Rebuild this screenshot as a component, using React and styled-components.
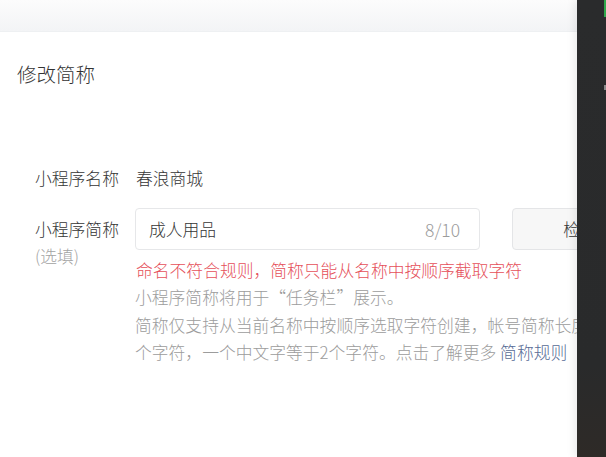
import React from "react";
import styled, { createGlobalStyle } from "styled-components";

const GlobalStyle = createGlobalStyle`
	html, body {
		margin: 0;
		padding: 0;
		background: #fff;
	}
	body {
		font-family: "Noto Sans CJK SC", "Liberation Sans", sans-serif;
		font-weight: 300;
		color: #353535;
	}
`;

const Page = styled.div`
	position: relative;
	width: 606px;
	height: 457px;
	overflow: hidden;
	background: #fff;
`;

const TopBar = styled.div`
	height: 31px;
	background: linear-gradient(#fcfcfc, #f3f4f6);
	border-bottom: 1px solid #eef0f2;
`;

const Panel = styled.div`
	padding: 28px 0 0 17px;
`;

const Title = styled.h2`
	margin: 0;
	font-size: 19.5px;
	font-weight: 300;
	line-height: 27px;
	color: #333;
`;

const Form = styled.div`
	display: flex;
	flex-direction: column;
	padding: 79px 0 0 18px;
`;

const Row = styled.div`
	display: flex;
	align-items: flex-start;
	margin-top: ${({ gap }) => gap || 0}px;
`;

const Label = styled.div`
	width: 100px;
	flex-shrink: 0;
	font-size: 16.8px;
	line-height: ${({ tall }) => (tall ? "42px" : "24px")};
	color: #353535;
`;

const Optional = styled.div`
	font-size: 16.8px;
	line-height: 12px;
	color: #a3a3a3;
`;

const Value = styled.div`
	font-size: 16.8px;
	line-height: 24px;
	padding-left: 1px;
	color: #353535;
`;

const Field = styled.div`
	display: flex;
	flex-direction: column;
`;

const Controls = styled.div`
	display: flex;
	align-items: center;
	gap: 32px;
`;

const InputBox = styled.div`
	box-sizing: border-box;
	width: 345px;
	height: 42px;
	border: 1px solid #e6e7e9;
	border-radius: 4px;
	display: flex;
	align-items: center;
	justify-content: space-between;
	padding: 0 19px 0 13px;
	font-size: 16.8px;
	color: #353535;
`;

const Counter = styled.span`
	font-size: 17.5px;
	color: #9c9c9c;
`;

const CheckButton = styled.button`
	box-sizing: border-box;
	width: 136px;
	height: 42px;
	border: 1px solid #e4e5e7;
	border-radius: 4px;
	background: #f7f7f7;
	font-family: inherit;
	font-weight: 300;
	font-size: 16.8px;
	color: #353535;
`;

const ErrorText = styled.div`
	margin-top: 8px;
	padding-left: 1px;
	font-size: 16.8px;
	line-height: 24px;
	color: #e5505a;
`;

const Desc = styled.div`
	margin-top: 2px;
	font-size: 16.8px;
	line-height: 27.5px;
	color: #9c9c9c;
`;

const Line = styled.div`
	white-space: nowrap;
`;

const Link = styled.a`
	color: #576b95;
	text-decoration: none;
`;

const DarkWindow = styled.div`
	position: absolute;
	top: 0;
	right: 0;
	width: 29px;
	height: 457px;
	background: linear-gradient(#2a2b2c, #292a2b 80%, #2e2a27);
	box-shadow: -3px 0 8px rgba(0, 0, 0, 0.08);
`;

const Mark = styled.div`
	position: absolute;
	right: 0;
	top: ${({ top }) => top}px;
	width: 2px;
	height: ${({ h }) => h}px;
	background: ${({ color }) => color};
`;

export default function App() {
	return (
		<Page>
			<GlobalStyle />
			<TopBar />
			<Panel>
				<Title>修改简称</Title>
				<Form>
					<Row>
						<Label>小程序名称</Label>
						<Value>春浪商城</Value>
					</Row>
					<Row gap={18}>
						<Field>
							<Label tall>小程序简称</Label>
							<Optional>(选填)</Optional>
						</Field>
						<Field>
							<Controls>
								<InputBox>
									<span>成人用品</span>
									<Counter>8/10</Counter>
								</InputBox>
								<CheckButton>检测</CheckButton>
							</Controls>
							<ErrorText>命名不符合规则，简称只能从名称中按顺序截取字符</ErrorText>
							<Desc>
								<Line>小程序简称将用于“任务栏”展示。</Line>
								<Line>简称仅支持从当前名称中按顺序选取字符创建，帐号简称长度</Line>
								<Line>
									个字符，一个中文字等于2个字符。点击了解更多 <Link href="#">简称规则</Link>
								</Line>
							</Desc>
						</Field>
					</Row>
				</Form>
			</Panel>
			<DarkWindow>
				<Mark top={0} h={17} color="#2fa84a" />
				<Mark top={85} h={5} color="#8a8a8a" />
			</DarkWindow>
		</Page>
	);
}
